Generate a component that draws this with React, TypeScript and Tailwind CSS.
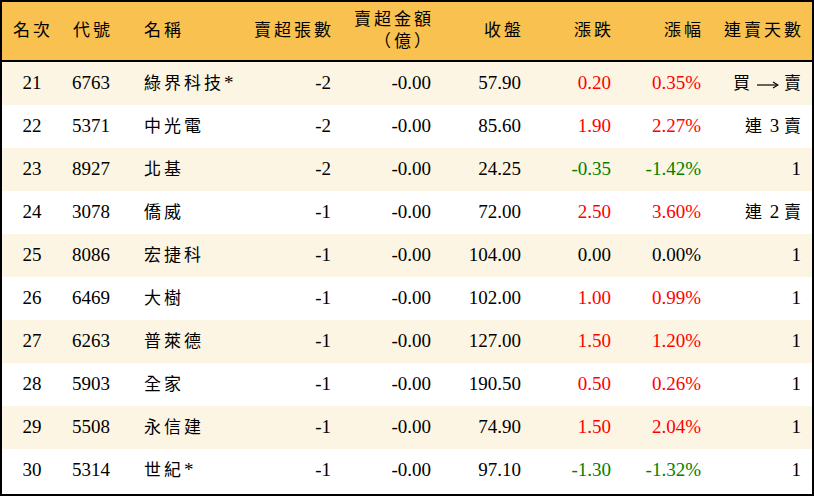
import React from 'react';

type Row = {
  rank: number;
  code: string;
  name: string;
  lots: string;
  amount: string;
  close: string;
  change: string;
  pct: string;
  days: React.ReactNode;
};

const Cjk = ({ children, last }: { children: React.ReactNode; last?: boolean }) => (
  <span className={`text-[17px] ${last ? '' : 'tracking-[3px]'}`}>{children}</span>
);

const Arrow = () => (
  <svg width="22" height="10" viewBox="0 0 22 10" className="inline-block ml-[4px] mr-[5px] align-middle">
    <line x1="0" y1="5" x2="20" y2="5" stroke="black" strokeWidth="1.2" />
    <path d="M16 2 L21 5 L16 8" fill="none" stroke="black" strokeWidth="1.2" />
  </svg>
);

const rows: Row[] = [
  { rank: 21, code: '6763', name: '綠界科技*', lots: '-2', amount: '-0.00', close: '57.90', change: '0.20', pct: '0.35%', days: <><Cjk>買</Cjk><Arrow /><Cjk last>賣</Cjk></> },
  { rank: 22, code: '5371', name: '中光電', lots: '-2', amount: '-0.00', close: '85.60', change: '1.90', pct: '2.27%', days: <><Cjk>連</Cjk> 3 <Cjk last>賣</Cjk></> },
  { rank: 23, code: '8927', name: '北基', lots: '-2', amount: '-0.00', close: '24.25', change: '-0.35', pct: '-1.42%', days: '1' },
  { rank: 24, code: '3078', name: '僑威', lots: '-1', amount: '-0.00', close: '72.00', change: '2.50', pct: '3.60%', days: <><Cjk>連</Cjk> 2 <Cjk last>賣</Cjk></> },
  { rank: 25, code: '8086', name: '宏捷科', lots: '-1', amount: '-0.00', close: '104.00', change: '0.00', pct: '0.00%', days: '1' },
  { rank: 26, code: '6469', name: '大樹', lots: '-1', amount: '-0.00', close: '102.00', change: '1.00', pct: '0.99%', days: '1' },
  { rank: 27, code: '6263', name: '普萊德', lots: '-1', amount: '-0.00', close: '127.00', change: '1.50', pct: '1.20%', days: '1' },
  { rank: 28, code: '5903', name: '全家', lots: '-1', amount: '-0.00', close: '190.50', change: '0.50', pct: '0.26%', days: '1' },
  { rank: 29, code: '5508', name: '永信建', lots: '-1', amount: '-0.00', close: '74.90', change: '1.50', pct: '2.04%', days: '1' },
  { rank: 30, code: '5314', name: '世紀*', lots: '-1', amount: '-0.00', close: '97.10', change: '-1.30', pct: '-1.32%', days: '1' },
];

const cols = 'grid grid-cols-[60px_68px_120px_91px_100px_90px_90px_90px_101px]';

const tone = (v: string) =>
  v.startsWith('-') ? 'text-[#008000]' : Number(v.replace('%', '')) > 0 ? 'text-[#ff0000]' : 'text-black';

const splitName = (name: string) => {
  const star = name.endsWith('*');
  const base = star ? name.slice(0, -1) : name;
  return (
    <>
      <Cjk>{base}</Cjk>
      {star && <span>*</span>}
    </>
  );
};

export default function App() {
  return (
    <div className="w-[814px] h-[496px] border-2 border-black bg-white text-black text-[19px] font-['Liberation_Serif','Noto_Sans_CJK_TC',serif]">
      <div className={`${cols} h-[60px] items-center bg-[#f9c14f] border-b-2 border-black text-[17px] tracking-[3px] whitespace-nowrap`}>
        <div className="pl-[11px]">名次</div>
        <div className="pl-[11px]">代號</div>
        <div className="pl-[14px]">名稱</div>
        <div className="text-right pr-[7px]">賣超張數</div>
        <div className="text-right pr-[7px] leading-[22px]">
          <div>賣超金額</div>
          <div>（億）</div>
        </div>
        <div className="text-right pr-[7px]">收盤</div>
        <div className="text-right pr-[7px]">漲跌</div>
        <div className="text-right pr-[7px]">漲幅</div>
        <div className="text-right pr-[8px]">連賣天數</div>
      </div>
      {rows.map((r, i) => (
        <div key={r.rank} className={`${cols} h-[43px] items-center whitespace-nowrap ${i % 2 === 0 ? 'bg-[#fdf5e3]' : 'bg-white'}`}>
          <div className="text-center">{r.rank}</div>
          <div className="pl-[10px]">{r.code}</div>
          <div className="pl-[14px]">{splitName(r.name)}</div>
          <div className="text-right pr-[10px]">{r.lots}</div>
          <div className="text-right pr-[10px]">{r.amount}</div>
          <div className="text-right pr-[10px]">{r.close}</div>
          <div className={`text-right pr-[10px] ${tone(r.change)}`}>{r.change}</div>
          <div className={`text-right pr-[10px] ${tone(r.pct)}`}>{r.pct}</div>
          <div className="text-right pr-[11px]">{r.days}</div>
        </div>
      ))}
    </div>
  );
}
